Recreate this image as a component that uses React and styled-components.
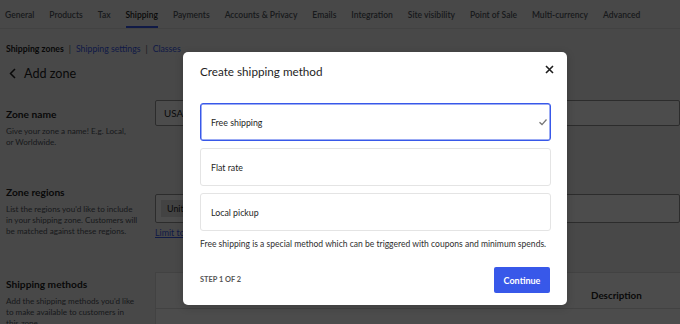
import React from "react";
import styled, { createGlobalStyle } from "styled-components";

const Global = createGlobalStyle`
  html, body { margin: 0; padding: 0; }
  body { font-family: Lato, "Noto Sans", sans-serif; background: #f0f0f1; }
`;

const Page = styled.div`
  position: relative;
  width: 680px;
  height: 324px;
  overflow: hidden;
  background: #f0f0f1;
  color: #1e1e1e;
`;

const Tabs = styled.nav`
  display: flex;
  height: 29px;
  padding: 2px 0 0 5px;
  gap: 15px;
  border-bottom: 1px solid #dcdcde;
  box-sizing: border-box;
`;

const Tab = styled.span`
  display: flex;
  align-items: center;
  font-size: 8.5px;
  font-weight: 600;
  color: ${(p) => (p.$active ? "#1e1e1e" : "#50575e")};
  box-shadow: ${(p) => (p.$active ? "inset 0 -2px 0 #3858e9" : "none")};
  white-space: nowrap;
`;

const SubNav = styled.div`
  display: flex;
  align-items: center;
  gap: 5px;
  padding: 14px 6px 0;
  font-size: 8.7px;
  height: 10px;
`;

const SubCurrent = styled.span`
  font-weight: 700;
  color: #1e1e1e;
`;

const SubSep = styled.span`
  color: #50575e;
`;

const SubLink = styled.span`
  color: #3858e9;
`;

const Back = styled.div`
  display: flex;
  align-items: center;
  gap: 8px;
  padding: 11px 9px 0;
  height: 18px;
  font-size: 12.6px;
  color: #1e1e1e;
`;

const Section = styled.section`
  display: grid;
  grid-template-columns: 149px 1fr;
  padding-left: 6px;
  margin-top: ${(p) => p.$mt}px;
`;

const SecText = styled.div`
  padding-top: ${(p) => p.$pt || 0}px;
`;

const SecTitle = styled.h3`
  margin: 0 0 5px;
  font-size: 10.2px;
  line-height: 14px;
  font-weight: 700;
  color: #1e1e1e;
`;

const SecDesc = styled.p`
  margin: 0;
  font-size: 8.1px;
  line-height: 11px;
  color: #50575e;
  white-space: nowrap;
`;

const FieldBox = styled.div`
  height: ${(p) => p.$h}px;
  margin-top: ${(p) => p.$mt || 0}px;
  border: 1px solid #949494;
  border-radius: 2px;
  box-sizing: border-box;
  display: flex;
  align-items: center;
  padding-left: ${(p) => p.$pl}px;
  font-size: 9.8px;
  background: #fff;
`;

const Chip = styled.span`
  background: #e0e0e0;
  padding: 3px 6px;
  font-size: 8.9px;
`;

const LimitLink = styled.span`
  display: block;
  margin-top: 4px;
  font-size: 8.9px;
  color: #3858e9;
  text-decoration: underline;
`;

const Table = styled.div`
  border: 1px solid #dcdcde;
  border-right: 0;
  background: #fff;
  height: 80px;
`;

const TableHead = styled.div`
  height: 36px;
  border-bottom: 1px solid #dcdcde;
  display: flex;
  align-items: center;
  padding: 8px 0 0 435px;
  box-sizing: border-box;
  font-size: 9.8px;
  font-weight: 700;
`;

const Overlay = styled.div`
  position: absolute;
  inset: 0;
  background: rgba(0, 0, 0, 0.7);
  padding: 52px 0 0 183px;
  box-sizing: border-box;
`;

const Modal = styled.div`
  width: 384px;
  height: 253px;
  background: #fff;
  border-radius: 5px;
  box-sizing: border-box;
  padding: 0 16px 0 17px;
  display: flex;
  flex-direction: column;
  box-shadow: 0 2px 8px rgba(0, 0, 0, 0.2);
`;

const ModalHeader = styled.div`
  display: flex;
  align-items: center;
  justify-content: space-between;
  height: 38px;
  box-sizing: border-box;
`;

const ModalTitle = styled.h2`
  margin: 0;
  font-size: 11.7px;
  font-weight: 400;
  color: #1e1e1e;
`;

const CloseBtn = styled.button`
  border: 0;
  background: none;
  padding: 0;
  width: 16px;
  height: 16px;
  display: flex;
  align-items: center;
  justify-content: center;
  margin-right: -6px;
  margin-top: -4px;
`;

const Options = styled.div`
  display: flex;
  flex-direction: column;
  gap: 7px;
  margin-top: 13px;
`;

const Option = styled.div`
  height: 38px;
  box-sizing: border-box;
  border-radius: 3px;
  border: 1px solid ${(p) => (p.$selected ? "#3858e9" : "#e4e4e4")};
  box-shadow: ${(p) => (p.$selected ? "inset 0 0 0 0.5px #3858e9" : "none")};
  display: flex;
  align-items: center;
  justify-content: space-between;
  padding: 0 1px 0 10px;
  font-size: 8.8px;
  color: #1e1e1e;
`;

const Help = styled.p`
  margin: 8px 0 0;
  font-size: 8.55px;
  color: #2f2f2f;
  white-space: nowrap;
`;

const Footer = styled.div`
  display: flex;
  align-items: center;
  justify-content: space-between;
  margin-top: 16px;
`;

const Step = styled.span`
  font-size: 7.4px;
  font-weight: 700;
  color: #555;
  text-transform: uppercase;
`;

const Primary = styled.button`
  width: 56px;
  height: 26px;
  border: 0;
  border-radius: 2px;
  background: #3858e9;
  color: #fff;
  font-family: inherit;
  font-size: 9px;
  font-weight: 700;
  margin-right: 1px;
  margin-top: 2px;
`;

const tabs = [
  "General",
  "Products",
  "Tax",
  "Shipping",
  "Payments",
  "Accounts & Privacy",
  "Emails",
  "Integration",
  "Site visibility",
  "Point of Sale",
  "Multi-currency",
  "Advanced",
];

export default function App() {
  return (
    <>
      <Global />
      <Page>
        <Tabs>
          {tabs.map((t) => (
            <Tab key={t} $active={t === "Shipping"}>
              {t}
            </Tab>
          ))}
        </Tabs>
        <SubNav>
          <SubCurrent>Shipping zones</SubCurrent>
          <SubSep>|</SubSep>
          <SubLink>Shipping settings</SubLink>
          <SubSep>|</SubSep>
          <SubLink>Classes</SubLink>
        </SubNav>
        <Back>
          <svg width="7" height="11" viewBox="0 0 7 11">
            <path d="M6 1L1.5 5.5L6 10" fill="none" stroke="#1e1e1e" strokeWidth="1.5" />
          </svg>
          <span>Add zone</span>
        </Back>
        <Section $mt={18}>
          <SecText $pt={7}>
            <SecTitle>Zone name</SecTitle>
            <SecDesc>
              Give your zone a name! E.g. Local,
              <br />
              or Worldwide.
            </SecDesc>
          </SecText>
          <div>
            <FieldBox $h={26} $pl={8}>USA</FieldBox>
          </div>
        </Section>
        <Section $mt={37}>
          <SecText $pt={0}>
            <SecTitle>Zone regions</SecTitle>
            <SecDesc>
              List the regions you'd like to include
              <br />
              in your shipping zone. Customers will
              <br />
              be matched against these regions.
            </SecDesc>
          </SecText>
          <div>
            <FieldBox $h={29} $pl={5} $mt={9}>
              <Chip>United States</Chip>
            </FieldBox>
            <LimitLink>Limit to specific ZIP/postcodes</LimitLink>
          </div>
        </Section>
        <Section $mt={34}>
          <SecText $pt={5}>
            <SecTitle>Shipping methods</SecTitle>
            <SecDesc>
              Add the shipping methods you'd like
              <br />
              to make available to customers in
              <br />
              this zone.
            </SecDesc>
          </SecText>
          <div>
            <Table>
              <TableHead>Description</TableHead>
            </Table>
          </div>
        </Section>

        <Overlay>
          <Modal>
            <ModalHeader>
              <ModalTitle>Create shipping method</ModalTitle>
              <CloseBtn aria-label="Close">
                <svg width="9" height="9" viewBox="0 0 9 9">
                  <path d="M1 1L8 8M8 1L1 8" stroke="#1e1e1e" strokeWidth="1.6" />
                </svg>
              </CloseBtn>
            </ModalHeader>
            <Options>
              <Option $selected>
                <span>Free shipping</span>
                <svg width="12" height="12" viewBox="0 0 12 12">
                  <path d="M2.5 6.3L5 8.6L9.5 3.5" fill="none" stroke="#757575" strokeWidth="1.3" />
                </svg>
              </Option>
              <Option>
                <span>Flat rate</span>
              </Option>
              <Option>
                <span>Local pickup</span>
              </Option>
            </Options>
            <Help>
              Free shipping is a special method which can be triggered with coupons and minimum spends.
            </Help>
            <Footer>
              <Step>Step 1 of 2</Step>
              <Primary>Continue</Primary>
            </Footer>
          </Modal>
        </Overlay>
      </Page>
    </>
  );
}
